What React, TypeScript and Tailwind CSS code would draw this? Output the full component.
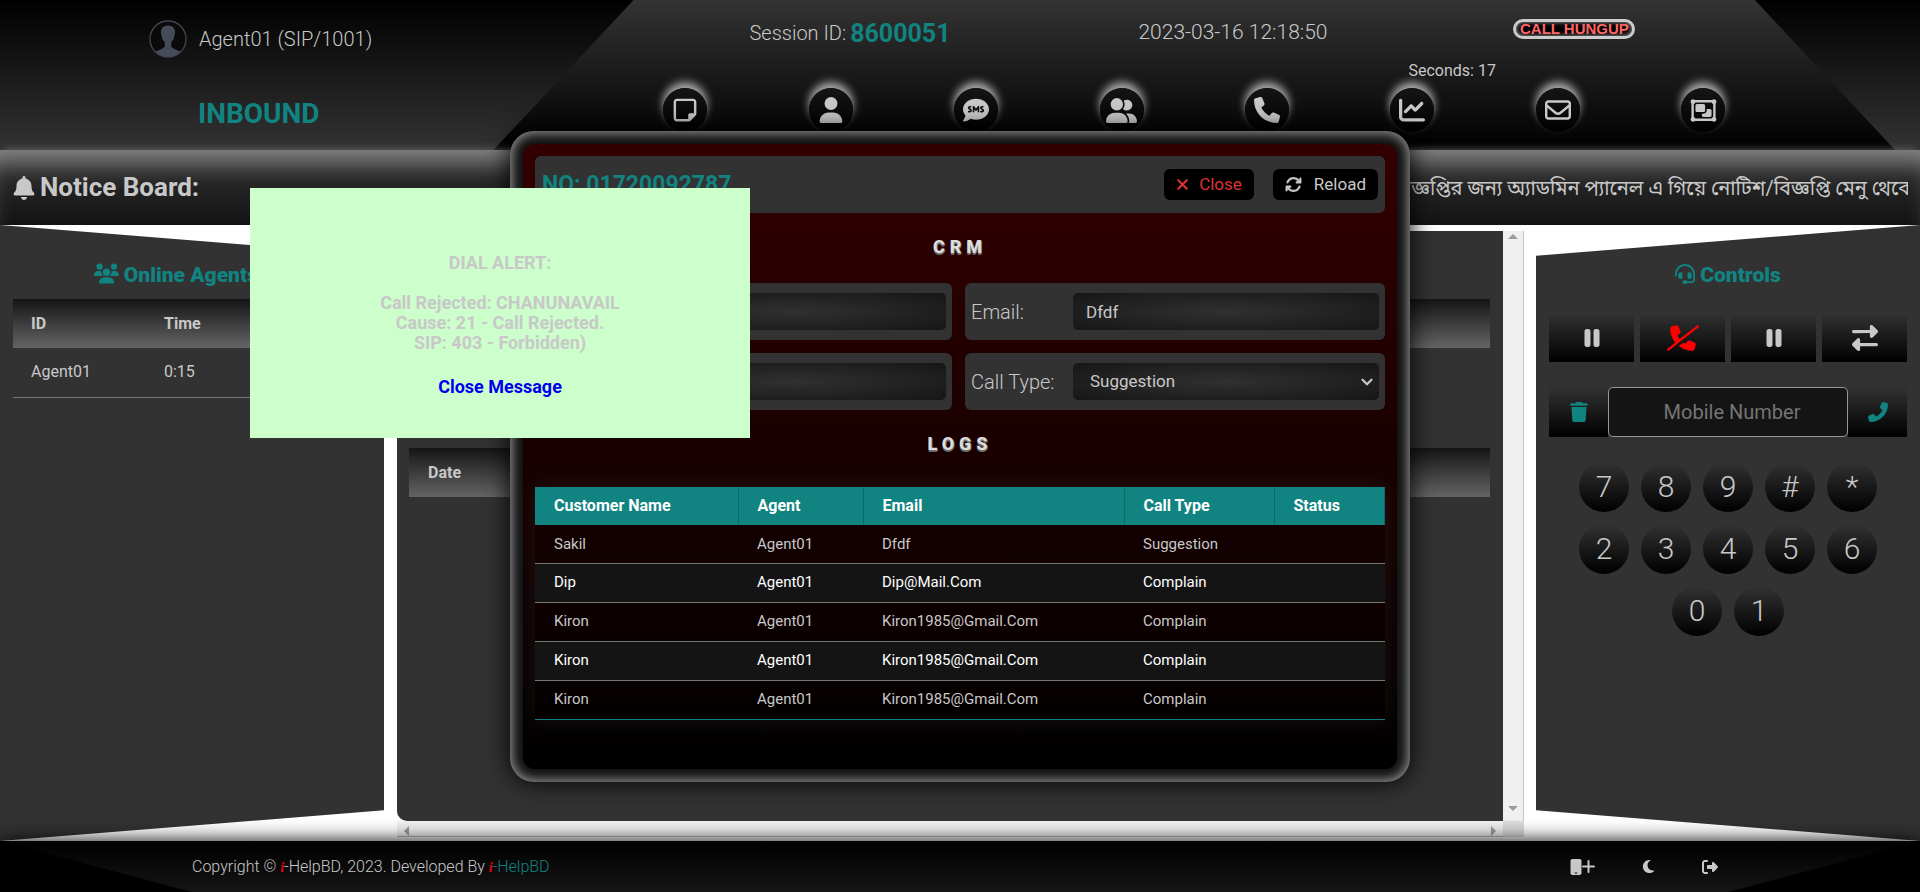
import React from "react";
import {
  FaArrowsRotate, FaBell, FaChartLine, FaCommentSms, FaHeadset, FaMobile, FaMoon, FaPause, FaPhone,
  FaPhoneSlash, FaRegEnvelope, FaRegNoteSticky, FaRegObjectGroup, FaRightFromBracket,
  FaRightLeft, FaTrash, FaUser, FaUserGroup, FaUsers, FaXmark,
} from "react-icons/fa6";
import { ChevronDown } from "lucide-react";

const navItems = [
  { label: "Notes", icon: <FaRegNoteSticky className="size-[26px]" /> },
  { label: "Profile", icon: <FaUser className="size-[26px]" /> },
  { label: "SMS", icon: <FaCommentSms className="size-[26px]" /> },
  { label: "Contacts", icon: <FaUserGroup className="size-[31px]" /> },
  { label: "Calls", icon: <FaPhone className="size-[26px]" /> },
  { label: "Reports", icon: <FaChartLine className="size-[26px]" /> },
  { label: "Mail", icon: <FaRegEnvelope className="size-[26px]" /> },
  { label: "Groups", icon: <FaRegObjectGroup className="size-[29px]" /> },
];

const logs = [
  ["Sakil", "Agent01", "Dfdf", "Suggestion", ""],
  ["Dip", "Agent01", "Dip@Mail.Com", "Complain", ""],
  ["Kiron", "Agent01", "Kiron1985@Gmail.Com", "Complain", ""],
  ["Kiron", "Agent01", "Kiron1985@Gmail.Com", "Complain", ""],
  ["Kiron", "Agent01", "Kiron1985@Gmail.Com", "Complain", ""],
];

const keys = ["7", "8", "9", "#", "*", "2", "3", "4", "5", "6", "0", "1"];

function Avatar() {
  return (
    <svg viewBox="0 0 38 38" className="size-[38px]" aria-hidden="true">
      <circle cx="19" cy="19" r="18" fill="#0a0a0a" stroke="#3f4450" strokeWidth="1.4" />
      <path
        d="M19 5.500c-4.600 0-7.200 2.800-7 7 .1 1.300.3 2.300.6 3.200.5 3 1.700 5.200 3.200 6.500v4.300c-1 2.300-6 3-9 5.300A18 18 0 0 0 19 37a18 18 0 0 0 12.200-5.200c-3-2.300-8-3-9-5.300v-4.300c1.500-1.300 2.700-3.500 3.200-6.500.3-.9.500-1.900.6-3.200.2-4.200-2.400-7-7-7z"
        fill="#454b59"
      />
    </svg>
  );
}

function TopBar() {
  return (
    <header className="flex h-[150px] bg-linear-to-b/srgb from-black to-[#333]">
      <div className="flex w-[25.7%] flex-col pt-5 pl-[149px]">
        <div className="flex items-center gap-3 text-xl font-light">
          <Avatar />
          <span>Agent01 (SIP/1001)</span>
        </div>
        <strong className="mt-9 pl-[49px] text-[28px] leading-10 font-bold text-[#118380]">INBOUND</strong>
      </div>
      <div className="flex w-[73%] flex-col bg-linear-to-b/srgb from-[#333] to-black px-[119px] [clip-path:polygon(10%_0,90%_0,100%_100%,0_100%)]">
        <div className="grid h-[88px] grid-cols-[526px_270px_1fr] pt-2 text-xl font-light">
          <div className="flex h-[50px] items-center gap-1 pl-[137px]">
            Session ID: <strong className="text-[25px] font-bold text-[#118380]">8600051</strong>
          </div>
          <div className="flex h-[50px] items-center text-[21px]">2023-03-16 12:18:50</div>
          <div className="flex flex-col">
            <div className="pt-[11px] pl-[105px]">
              <div className="w-[122px] rounded-full border-[3px] border-[#ccc] bg-black text-center font-['Liberation_Sans'] text-[15px] leading-[14px] font-bold text-[#f66] shadow-[inset_0_0_5px_#aaa]">
                CALL HUNGUP
              </div>
            </div>
            <span className="mt-5 text-base font-normal">Seconds: 17</span>
          </div>
        </div>
        <nav className="grid grid-cols-8">
          {navItems.map((n) => (
            <a key={n.label} href="#" aria-label={n.label} className="mx-auto flex size-11 items-center justify-center rounded-full bg-linear-to-b/srgb from-[#151515] to-black shadow-[0_-6px_8px_#aaa]">
              {n.icon}
            </a>
          ))}
        </nav>
      </div>
    </header>
  );
}

function NoticeBoard() {
  return (
    <section className="relative flex h-[75px] items-center bg-linear-to-b/srgb from-[#333] to-[#131313] px-3 shadow-[inset_0_26px_24px_-14px_#888,0_-4px_8px_-4px_#666]">
      <h2 className="flex shrink-0 items-center gap-1 text-[26px] font-bold">
        <FaBell className="size-6" /> Notice Board:
      </h2>
      <div className="ml-auto w-[514px] overflow-hidden text-xl whitespace-nowrap">
        বিজ্ঞপ্তির জন্য অ্যাডমিন প্যানেল এ গিয়ে নোটিশ/বিজ্ঞপ্তি মেনু থেকে
      </div>
    </section>
  );
}

function AgentsPanel() {
  return (
    <aside className="w-[20%] bg-[#323232] px-[13px] pt-9 [clip-path:polygon(0_0,100%_5%,100%_95%,0_100%)]">
      <h2 className="flex h-[38px] items-start justify-center gap-[5px] text-[21px] leading-7 font-black text-[#118380]">
        <FaUsers className="size-[25px]" /> Online Agents (1)
      </h2>
      <table className="w-full text-left text-base">
        <thead>
          <tr className="h-[49px] bg-linear-to-b/srgb from-[#151515] to-[#646464]">
            <th className="w-[133px] pl-[18px] font-bold">ID</th>
            <th className="pl-[18px] font-bold">Time</th>
          </tr>
        </thead>
        <tbody>
          <tr className="h-[49px] border-b border-[#757575]">
            <td className="pl-[18px]">Agent01</td>
            <td className="pl-[18px]">0:15</td>
          </tr>
        </tbody>
      </table>
    </aside>
  );
}

function Arrow({ d }: { d: string }) {
  return (
    <svg viewBox="0 0 10 10" className="size-[10px] shrink-0" aria-hidden="true">
      <path d={d} fill="#9b9b9b" />
    </svg>
  );
}

function QueuePanel() {
  return (
    <main className="mt-[6px] mr-3 mb-1 ml-[13px] grid flex-1 grid-cols-[1fr_21px] grid-rows-[1fr_16px]">
      <div className="rounded-bl-[10px] bg-[#323232] pt-[68px] pr-[13px] pl-3">
        <div className="h-[49px] bg-linear-to-b/srgb from-[#151515] to-[#646464]" />
        <table className="mt-[100px] w-full text-left text-base">
          <thead>
            <tr className="h-[49px] bg-linear-to-b/srgb from-[#151515] to-[#646464]">
              <th className="pl-[19px] font-bold">Date</th>
            </tr>
          </thead>
        </table>
      </div>
      <div className="flex flex-col items-center justify-between border-r border-[#c4c4c4] bg-[#f0f0f0] pt-[2px] pb-[6px]">
        <Arrow d="M0 6l5-5 5 5z" />
        <Arrow d="M0 1l5 5 5-5z" />
      </div>
      <div className="flex items-end justify-between border-b border-[#bbb] bg-[#f0f0f0] px-[6px]">
        <Arrow d="M6 0l-5 5 5 5z" />
        <Arrow d="M4 0l5 5-5 5z" />
      </div>
      <div className="bg-[#dcdcdc]" />
    </main>
  );
}

function ControlsPanel() {
  const action = "flex h-[49px] items-center justify-center bg-linear-to-b/srgb from-[#323232] to-black";
  const side = "flex h-[50px] w-[59px] items-center justify-center bg-linear-to-b/srgb from-[#323232] to-black text-xl";
  return (
    <aside className="w-[20%] bg-[#323232] px-[13px] pt-9 [clip-path:polygon(0_5%,100%_0,100%_100%,0_95%)]">
      <h2 className="flex h-[52px] items-start justify-center gap-[5px] text-[21px] leading-7 font-black text-[#118380]">
        <FaHeadset className="mt-[3px] size-5" /> Controls
      </h2>
      <div className="grid grid-cols-4 gap-[6px]">
        <button aria-label="Pause" className={action}><FaPause className="size-6" /></button>
        <button aria-label="Hang up" className={action}><FaPhoneSlash className="size-8 text-[#ff0000]" /></button>
        <button aria-label="Hold" className={action}><FaPause className="size-6" /></button>
        <button aria-label="Transfer" className={action}><FaRightLeft className="size-[26px]" /></button>
      </div>
      <div className="mt-[25px] flex text-[#118380]">
        <button aria-label="Clear" className={side}><FaTrash /></button>
        <input aria-label="Mobile Number" placeholder="Mobile Number" className="h-[50px] min-w-0 flex-1 rounded-[5px] border border-[#999] bg-[#141414] pl-2 text-center text-xl placeholder:text-[#757575]" />
        <button aria-label="Dial" className={side}><FaPhone className="-scale-x-100" /></button>
      </div>
      <div className="mt-[25px] flex flex-wrap justify-center gap-3 px-5">
        {keys.map((k) => (
          <button key={k} className="size-[50px] rounded-full bg-linear-to-b/srgb from-[#323232] to-black text-3xl font-light">
            {k}
          </button>
        ))}
      </div>
    </aside>
  );
}

const fieldBox = "flex h-[57px] items-center justify-end rounded-md bg-[#323232] px-[6px]";
const fieldInput = "h-[37px] w-[306px] rounded-[5px] bg-radial/srgb from-[#303030] to-[#161616] px-[13px] text-[17px] font-normal";
const glossy = "text-center text-lg leading-7 font-extrabold tracking-[5px] text-[#ddd] [text-shadow:1px_1px_0_#777,0_2px_0_#666]";

function CrmDialog() {
  return (
    <div role="dialog" aria-label="CRM" className="absolute top-[131px] left-1/2 w-[900px] -translate-x-1/2 rounded-3xl bg-[#111] p-[13px] shadow-[inset_0_0_12px_2px_#999,0_0_25px_#000]">
      <div className="h-[625px] rounded-xl bg-linear-to-b/srgb from-[#330000] to-black px-3 pt-3">
        <div className="flex h-[57px] items-center rounded-md bg-[#323232] px-[7px]">
          <h2 className="mr-auto pt-[2px] text-[23px] font-bold text-[#118380]">NO: 01720092787</h2>
          <button className="flex h-[31px] items-center gap-2 rounded-md bg-black pr-3 pl-[10px] text-[17px] text-[#d33]">
            <FaXmark /> Close
          </button>
          <button className="ml-[19px] flex h-[31px] items-center gap-3 rounded-md bg-black px-3 text-[17px]">
            <FaArrowsRotate /> Reload
          </button>
        </div>
        <h3 className={`${glossy} mt-5`}>CRM</h3>
        <div className="mt-[22px] grid grid-cols-[417px_1fr] gap-[13px] text-xl font-light">
          <div className={fieldBox}><input aria-label="Name" className={fieldInput} /></div>
          <label className={fieldBox}><span className="flex-1">Email:</span><input defaultValue="Dfdf" className={fieldInput} /></label>
          <div className={fieldBox}><input aria-label="Address" className={fieldInput} /></div>
          <label className={fieldBox}>
            <span className="flex-1">Call Type:</span>
            <span className="relative">
              <select className="block h-[37px] w-[306px] appearance-none rounded-[5px] bg-radial/srgb from-[#303030] to-[#161616] pl-[17px] text-[17px] font-normal">
                <option>Suggestion</option>
                <option>Complain</option>
              </select>
              <ChevronDown className="pointer-events-none absolute top-[10px] right-[3px] size-[18px]" strokeWidth={3} />
            </span>
          </label>
        </div>
        <h3 className={`${glossy} mt-5`}>LOGS</h3>
        <table className="mt-[29px] w-full table-fixed text-left text-[15px] shadow-[0_0_20px_rgba(255,255,255,0.08)]">
          <colgroup>
            <col className="w-[203px]" />
            <col className="w-[125px]" />
            <col className="w-[261px]" />
            <col className="w-[150px]" />
            <col />
          </colgroup>
          <thead>
            <tr className="h-[38px] bg-[#118380] text-base text-white">
              {["Customer Name", "Agent", "Email", "Call Type", "Status"].map((h) => (
                <th key={h} className="border-r border-[#0d6b69] pl-[19px] font-bold">{h}</th>
              ))}
            </tr>
          </thead>
          <tbody>
            {logs.map((row, i) => (
              <tr key={i} className="h-[39px] border-b border-[#777] first:h-[38px] last:border-[#118380] even:bg-[#141414] even:text-white">
                {row.map((c, j) => (
                  <td key={j} className="pl-[19px]">{c}</td>
                ))}
              </tr>
            ))}
          </tbody>
        </table>
      </div>
    </div>
  );
}

function DialAlert() {
  return (
    <div role="alert" className="absolute top-[188px] left-[250px] h-[250px] w-[500px] bg-[#ccffcc] pt-[65px] text-center text-lg leading-5 font-bold">
      <p>DIAL ALERT:</p>
      <p className="mt-5">
        Call Rejected: CHANUNAVAIL<br />Cause: 21 - Call Rejected.<br />SIP: 403 - Forbidden)
      </p>
      <a href="#" className="mt-6 inline-block text-[#0000ee]">Close Message</a>
    </div>
  );
}

function Brand() {
  return <i className="font-['Liberation_Serif'] text-sm font-bold text-red-600">i</i>;
}

function Footer() {
  return (
    <footer className="relative h-[51px] bg-black shadow-[0_0_20px_#000]">
      <div className="flex h-full items-center bg-linear-to-b/srgb from-black to-[#151515] pr-[202px] pl-48 text-base font-light [clip-path:polygon(0_0,100%_0,90%_100%,10%_100%)]">
        <p className="mr-auto">
          Copyright © <Brand />-HelpBD, 2023. Developed By{" "}
          <a href="#" className="text-[#118380]"><Brand />-HelpBD</a>
        </p>
        <div className="flex items-center gap-[46px]">
          <button aria-label="Add phone" className="flex items-center">
            <FaMobile className="size-4" />
            <svg viewBox="0 0 13 13" className="-ml-[2px] size-[13px]" aria-hidden="true">
              <path d="M6.500 1v11M1 6.500h11" stroke="currentColor" strokeWidth="2" strokeLinecap="round" />
            </svg>
          </button>
          <button aria-label="Dark mode"><FaMoon className="size-[15px]" /></button>
          <button aria-label="Log out"><FaRightFromBracket /></button>
        </div>
      </div>
    </footer>
  );
}

export default function App() {
  return (
    <div className="relative flex min-h-screen flex-col overflow-hidden bg-white font-[Roboto,'Noto_Sans_Bengali',sans-serif] text-[#c8c8c8]">
      <TopBar />
      <NoticeBoard />
      <div className="flex flex-1">
        <AgentsPanel />
        <QueuePanel />
        <ControlsPanel />
      </div>
      <Footer />
      <CrmDialog />
      <DialAlert />
    </div>
  );
}
